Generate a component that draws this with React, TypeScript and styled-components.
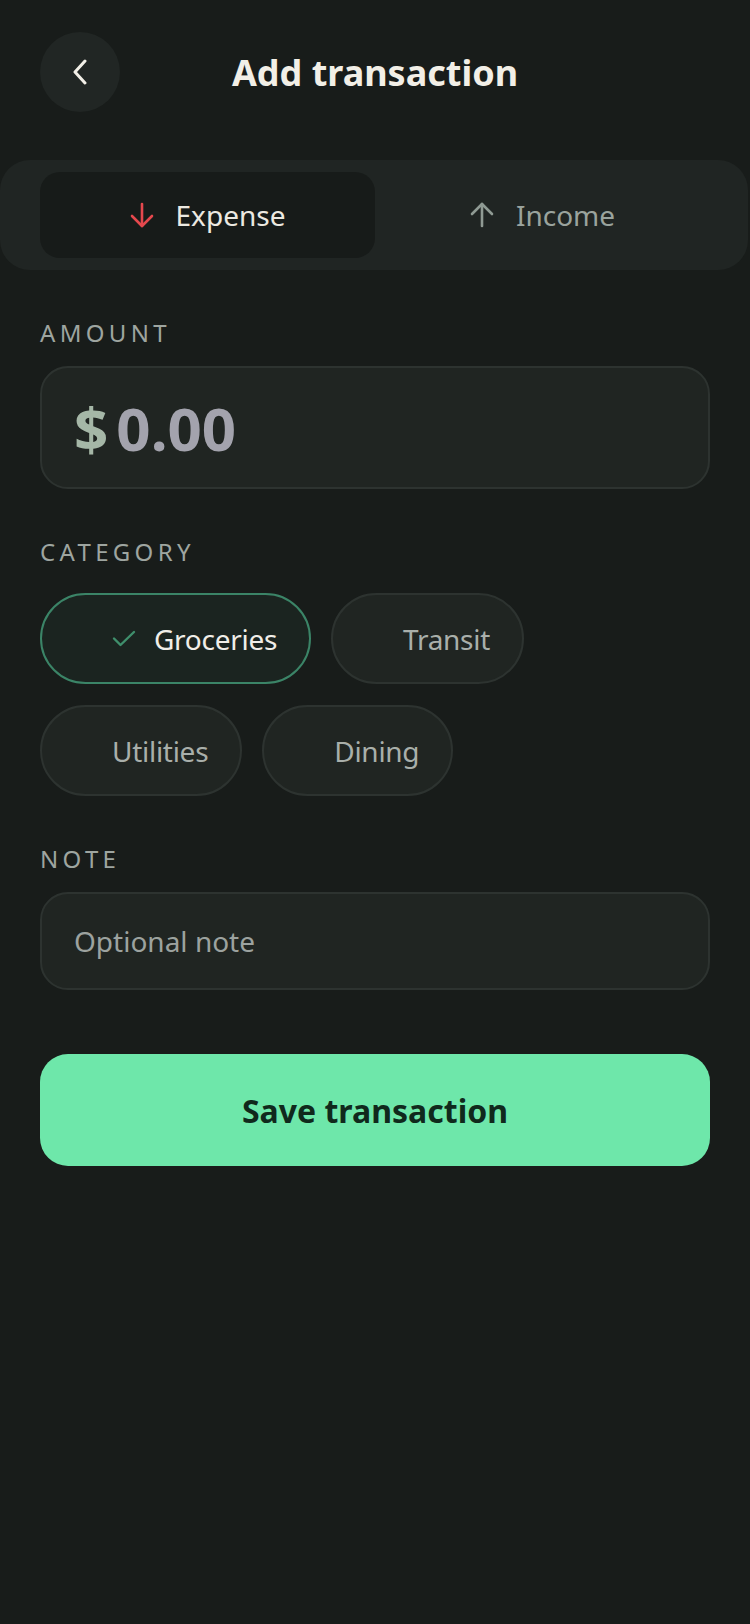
import { useState } from 'react'
import styled, { createGlobalStyle } from 'styled-components'

const GlobalStyle = createGlobalStyle`
  * { box-sizing: border-box; }
  html, body {
    margin: 0;
    padding: 0;
    background: #181c1a;
  }
  body {
    font-family: "Noto Sans", "Open Sans", sans-serif;
    color: #ece9e1;
  }
`

const Page = styled.div`
  min-height: 1624px;
  padding: 32px 40px 0;
  background: #181c1a;
  overflow: hidden;
`

const Header = styled.header`
  display: grid;
  grid-template-columns: 80px 1fr 80px;
  align-items: center;
  height: 80px;
`

const BackBtn = styled.button`
  width: 80px;
  height: 80px;
  border-radius: 50%;
  border: none;
  background: #212624;
  color: #f2efe7;
  display: flex;
  align-items: center;
  justify-content: center;
  padding: 0;
  cursor: pointer;
`

const Title = styled.h1`
  margin: 0;
  text-align: center;
  font-size: 36px;
  font-weight: 700;
  color: #f2efe7;
`

const Toggle = styled.div`
  display: grid;
  grid-template-columns: 1fr 1fr;
  margin: 48px -38px 0 -40px;
  padding: 12px 38px 12px 40px;
  background: #202523;
  border-radius: 30px;
`

const Segment = styled.button<{ $active?: boolean }>`
  height: 86px;
  border: none;
  border-radius: 20px;
  display: flex;
  align-items: center;
  justify-content: center;
  gap: 22px;
  font-family: inherit;
  font-size: 28px;
  background: ${p => (p.$active ? '#171b19' : 'transparent')};
  color: ${p => (p.$active ? '#ece9e1' : '#9aa39d')};
  cursor: pointer;
`

const Label = styled.div`
  margin-top: 47px;
  font-size: 24px;
  line-height: 32px;
  letter-spacing: 0.18em;
  color: #9ea5a0;
`

const AmountBox = styled.div`
  margin-top: 17px;
  height: 123px;
  border: 2px solid #2d3330;
  border-radius: 28px;
  background: #202522;
  display: flex;
  align-items: center;
  gap: 8px;
  padding: 0 32px;
  font-size: 60px;
  font-weight: 700;
  line-height: 1;
`

const Currency = styled.span`
  color: #a5b7a7;
`

const Value = styled.span`
  color: #a3a3ad;
`

const Chips = styled.div`
  margin-top: 25px;
  display: flex;
  flex-wrap: wrap;
  gap: 21px 20px;
`

const Chip = styled.button<{ $selected?: boolean }>`
  height: 91px;
  border-radius: 999px;
  border: 2px solid ${p => (p.$selected ? '#3b8467' : '#2d3330')};
  background: ${p => (p.$selected ? '#1b2420' : '#202522')};
  color: ${p => (p.$selected ? '#f0eee8' : '#a9afaa')};
  display: flex;
  align-items: center;
  gap: 18px;
  padding: 0 32px 0 70px;
  font-family: inherit;
  font-size: 28px;
  letter-spacing: -0.01em;
  cursor: pointer;
`

const NoteInput = styled.input`
  margin-top: 17px;
  width: 100%;
  height: 98px;
  border: 2px solid #2d3330;
  border-radius: 28px;
  background: #202522;
  padding: 0 32px;
  font-family: inherit;
  font-size: 28px;
  color: #ece9e1;
  outline: none;
  &::placeholder {
    color: #9ca29f;
  }
`

const SaveBtn = styled.button`
  margin-top: 64px;
  width: 100%;
  height: 112px;
  border: none;
  border-radius: 28px;
  background: #6ee7aa;
  color: #10291c;
  font-family: inherit;
  font-size: 32px;
  font-weight: 700;
  cursor: pointer;
`

function Arrow({ up, color }: { up?: boolean; color: string }) {
  return (
    <svg width="24" height="26" viewBox="0 0 24 26" fill="none" stroke={color} strokeWidth="2.6" strokeLinecap="round" strokeLinejoin="round"
      style={up ? { transform: 'rotate(180deg)' } : undefined}>
      <path d="M12 2v22" />
      <path d="M2 14l10 10 10-10" />
    </svg>
  )
}

const categories = ['Groceries', 'Transit', 'Utilities', 'Dining']

export default function App() {
  const [type, setType] = useState<'expense' | 'income'>('expense')
  const [category, setCategory] = useState('Groceries')
  const [note, setNote] = useState('')

  return (
    <Page>
      <GlobalStyle />
      <Header>
        <BackBtn aria-label="Back">
          <svg width="16" height="26" viewBox="0 0 16 26" fill="none" stroke="currentColor" strokeWidth="3" strokeLinecap="round" strokeLinejoin="round">
            <path d="M13 2L3 13l10 11" />
          </svg>
        </BackBtn>
        <Title>Add transaction</Title>
        <div />
      </Header>

      <Toggle>
        <Segment $active={type === 'expense'} onClick={() => setType('expense')}>
          <Arrow color="#e5484d" />
          Expense
        </Segment>
        <Segment $active={type === 'income'} onClick={() => setType('income')}>
          <Arrow up color="#8f9a93" />
          Income
        </Segment>
      </Toggle>

      <Label>AMOUNT</Label>
      <AmountBox>
        <Currency>$</Currency>
        <Value>0.00</Value>
      </AmountBox>

      <Label>CATEGORY</Label>
      <Chips>
        {categories.map(c => (
          <Chip key={c} $selected={c === category} onClick={() => setCategory(c)}>
            {c === category && (
              <svg width="24" height="17" viewBox="0 0 24 17" fill="none" stroke="#3f8f6c" strokeWidth="2.4" strokeLinecap="round" strokeLinejoin="round">
                <path d="M2 8.5l6.5 6.5L22 2" />
              </svg>
            )}
            {c}
          </Chip>
        ))}
      </Chips>

      <Label>NOTE</Label>
      <NoteInput placeholder="Optional note" value={note} onChange={e => setNote(e.target.value)} />

      <SaveBtn>Save transaction</SaveBtn>
    </Page>
  )
}
